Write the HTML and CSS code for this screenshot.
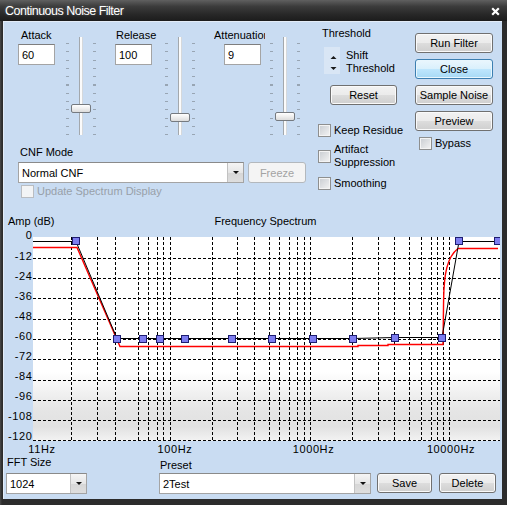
FILE: index.html
```html
<!DOCTYPE html>
<html lang="en">
<head>
    <meta charset="UTF-8">
    <title>Continuous Noise Filter</title>
    <link rel="stylesheet" href="styles.css">
</head>
<body>
<div class="window">
    <div class="titlebar">
        <span class="title">Continuous Noise Filter</span>
        <svg class="close" width="9" height="9" viewBox="0 0 9 9"><path d="M1.2 1.2l6.6 6.6M7.8 1.2l-6.6 6.6" stroke="#fff" stroke-width="2.2"/></svg>
    </div>

    <div class="client">
        <div class="top">
            <!-- sliders + mode -->
            <div class="controls">
                <div class="sliders">
                    <div class="sgroup attack">
                        <div class="sfield"><label>Attack</label><input class="num" type="text" value="60"></div>
                        <div class="slider"><span class="thumb" style="top: 69px"></span></div>
                    </div>
                    <div class="sgroup release">
                        <div class="sfield"><label>Release</label><input class="num" type="text" value="100"></div>
                        <div class="slider"><span class="thumb" style="top: 78px"></span></div>
                    </div>
                    <div class="sgroup atten">
                        <div class="sfield"><label>Attenuation</label><input class="num" type="text" value="9"></div>
                        <div class="slider"><span class="thumb" style="top: 77px"></span></div>
                    </div>
                </div>

                <div class="mode">
                    <div class="mode-label">CNF Mode</div>
                    <div class="mode-row">
                        <div class="select mode-select"><span class="value">Normal CNF</span><span class="drop"></span></div>
                        <button class="btn freeze" disabled>Freeze</button>
                    </div>
                    <label class="check disabled update"><span class="box"></span>Update Spectrum Display</label>
                </div>
            </div>

            <!-- threshold + options -->
            <div class="threshold">
                <div class="th-label">Threshold</div>
                <div class="spin-row">
                    <svg class="spin" width="16" height="27" viewBox="0 0 16 27">
                        <rect width="16" height="27" fill="#d9e6f5"/>
                        <path d="M6.5 12h6l-3-3z" fill="#1a1a1a"/>
                        <path d="M6.5 20h6l-3 3z" fill="#1a1a1a"/>
                    </svg>
                    <div class="spin-text">Shift<br>Threshold</div>
                </div>
                <button class="btn reset">Reset</button>
                <label class="check keep"><span class="box"></span>Keep Residue</label>
                <label class="check artifact"><span class="box"></span>Artifact<br>Suppression</label>
                <label class="check smooth"><span class="box"></span>Smoothing</label>
            </div>

            <!-- actions -->
            <div class="actions">
                <div class="action-list">
                    <button class="btn">Run Filter</button>
                    <button class="btn focus">Close</button>
                    <button class="btn">Sample Noise</button>
                    <button class="btn">Preview</button>
                </div>
                <label class="check bypass"><span class="box"></span>Bypass</label>
            </div>
        </div>

        <div class="chart-head">
            <span class="amp">Amp (dB)</span>
            <span class="chart-title">Frequency Spectrum</span>
        </div>

        <svg class="chart" width="499" height="225" viewBox="3 230 499 225">
            <defs>
                <linearGradient id="plotbg" x1="0" y1="0" x2="0" y2="1">
                    <stop offset="0" stop-color="#ffffff"/>
                    <stop offset="0.66" stop-color="#ffffff"/>
                    <stop offset="0.84" stop-color="#e6e6e6"/>
                    <stop offset="0.93" stop-color="#e1e1e1"/>
                    <stop offset="1" stop-color="#f3f3f3"/>
                </linearGradient>
                <clipPath id="plotclip"><rect x="33" y="237" width="467" height="204"/></clipPath>
            </defs>
            <rect x="33" y="237" width="467" height="204" fill="url(#plotbg)"/>

            <g clip-path="url(#plotclip)" shape-rendering="crispEdges" stroke="#000" stroke-width="1" stroke-dasharray="3 2">
                <path d="M33 258.5H500M33 278.5H500M33 298.5H500M33 319.5H500M33 339.5H500M33 359.5H500M33 380.5H500M33 400.5H500M33 420.5H500M33 440.5H500"/>
                <path d="M71.5 237V441M97.5 237V441M115.5 237V441M138.5 237V441M148.5 237V441M157.5 237V441M163.5 237V441M170.5 237V441M212.5 237V441M237.5 237V441M254.5 237V441M269.5 237V441M279.5 237V441M289.5 237V441M297.5 237V441M304.5 237V441M310.5 237V441M352.5 237V441M378.5 237V441M394.5 237V441M409.5 237V441M421.5 237V441M431.5 237V441M437.5 237V441M443.5 237V441M449.5 237V441"/>
            </g>

            <g clip-path="url(#plotclip)" fill="none">
                <path d="M33 247.5H77L120 346.5H358V345.5H388V344.5H443L443.6 300C444 274 447 257 458 248.5H498" stroke="#f00" stroke-width="1.4"/>
                <path d="M33 241.5H76L117 338.5H353L395 337.5H442L459 241.5H500" stroke="#000" stroke-width="1"/>
                <g fill="#7d7df0" stroke="#1c1c70" stroke-width="1" shape-rendering="crispEdges">
                    <rect x="72.5" y="237.5" width="7" height="7"/>
                    <rect x="113.5" y="335.5" width="7" height="7"/>
                    <rect x="139.5" y="335.5" width="7" height="7"/>
                    <rect x="156.5" y="335.5" width="7" height="7"/>
                    <rect x="181.5" y="335.5" width="7" height="7"/>
                    <rect x="228.5" y="335.5" width="7" height="7"/>
                    <rect x="268.5" y="335.5" width="7" height="7"/>
                    <rect x="309.5" y="335.5" width="7" height="7"/>
                    <rect x="349.5" y="335.5" width="7" height="7"/>
                    <rect x="391.5" y="334.5" width="7" height="7"/>
                    <rect x="438.5" y="334.5" width="7" height="7"/>
                    <rect x="455.5" y="237.5" width="7" height="7"/>
                    <rect x="494.5" y="237.5" width="7" height="7"/>
                </g>
            </g>

            <g class="axis" text-anchor="end">
                <text x="32.5" y="238.5">0</text>
                <text x="32.5" y="259.5">-12</text>
                <text x="32.5" y="279.5">-24</text>
                <text x="32.5" y="299.5">-36</text>
                <text x="32.5" y="319.5">-48</text>
                <text x="32.5" y="339.5">-60</text>
                <text x="32.5" y="359.5">-72</text>
                <text x="32.5" y="380">-84</text>
                <text x="32.5" y="400">-96</text>
                <text x="32.5" y="420">-108</text>
                <text x="32.5" y="440">-120</text>
            </g>
            <g class="axis" text-anchor="middle">
                <text x="42" y="453">11Hz</text>
                <text x="175" y="453">100Hz</text>
                <text x="313.5" y="453">1000Hz</text>
                <text x="451" y="453">10000Hz</text>
            </g>
        </svg>

        <div class="bottom">
            <div class="fft">
                <div class="fft-label">FFT Size</div>
                <div class="select"><span class="value">1024</span><span class="drop"></span></div>
            </div>
            <div class="preset">
                <div class="preset-label">Preset</div>
                <div class="select"><span class="value">2Test</span><span class="drop"></span></div>
            </div>
            <button class="btn save">Save</button>
            <button class="btn delete">Delete</button>
        </div>
    </div>
</div>
</body>
</html>
```

FILE: styles.css
```css
* {
    box-sizing: border-box;
}
body {
    margin: 0;
    font-family: "Liberation Sans", Arial, sans-serif;
    font-size: 11px;
    color: #000;
    background: #2e2e2e;
}
button, input {
    font: inherit;
    color: #000;
}

/* window frame */
.window {
    width: 507px;
    height: 505px;
    display: flex;
    flex-direction: column;
    background: linear-gradient(to right, #4a4a4a, #2c2c2c 2px);
}
.titlebar {
    height: 21px;
    flex: none;
    display: flex;
    align-items: flex-start;
    justify-content: space-between;
    padding: 0 7px 0 5px;
    background: linear-gradient(#606060, #3c3c3c 30%, #272727 70%, #1c1c1c);
    color: #fff;
}
.title {
    font-size: 12.5px;
    letter-spacing: -0.5px;
    line-height: 21px;
    margin-top: 1px;
    text-shadow: 0 0 3px rgba(255, 255, 255, 0.25);
}
.close {
    margin-top: 7px;
}
.client {
    flex: 1;
    margin: 0 5px 6px 3px;
    background: #c9dcf2;
    box-shadow: inset 1px 1px 0 #e3ecf7;
    display: flex;
    flex-direction: column;
}

/* top area */
.top {
    height: 193px;
    flex: none;
    display: flex;
}
.controls {
    width: 305px;
    flex: none;
}
.sliders {
    display: flex;
    margin-top: 8px;
}
.sgroup {
    display: flex;
}
.sfield {
    display: flex;
    flex-direction: column;
    width: 37px;
}
.sfield label {
    line-height: 13px;
    height: 13px;
    white-space: nowrap;
}
.num {
    margin-top: 2px;
    width: 37px;
    height: 21px;
    padding: 0 0 0 3px;
    border: 1px solid #a4a4a4;
    border-top-color: #7e7e7e;
    background: #fff;
    outline: none;
}
.attack {
    margin-left: 15px;
}
.attack label {
    padding-left: 3px;
}
.attack .slider {
    margin-left: 9px;
}
.release {
    margin-left: 19px;
}
.release label {
    padding-left: 1px;
}
.release .slider {
    margin-left: 11px;
}
.atten {
    margin-left: 19px;
}
.atten .sfield {
    width: 51px;
}
.atten label {
    overflow: hidden;
}
.atten .num {
    margin-left: 10px;
}
.atten .slider {
    margin-left: 3px;
}

.slider {
    position: relative;
    width: 32px;
    height: 100px;
    margin-top: 6px;
    background-image:
        repeating-linear-gradient(to bottom, #98a5b3 0 1px, transparent 1px 8.3px),
        repeating-linear-gradient(to bottom, #98a5b3 0 1px, transparent 1px 8.3px),
        linear-gradient(to right, #a3a8ad 0 1px, #fbfbfb 1px 3px, #d5d8db 3px 4px);
    background-size: 3px 92px, 3px 92px, 4px 100px;
    background-position: 2px 8px, 29px 8px, 15px 2px;
    background-repeat: no-repeat;
}
.thumb {
    position: absolute;
    left: 7px;
    width: 20px;
    height: 9px;
    border: 1px solid #757a80;
    border-radius: 2px;
    background: linear-gradient(#ffffff, #f0f0f0 45%, #dcdcdc);
}

/* mode */
.mode {
    margin-left: 15px;
    margin-top: 11px;
}
.mode-label {
    line-height: 13px;
    padding-left: 2px;
}
.mode-row {
    display: flex;
    margin-top: 3px;
}
.select {
    display: flex;
    align-items: center;
    height: 21px;
    background: #fff;
    border: 1px solid #a4a4a4;
    border-top-color: #8a8a8a;
}
.select .value {
    flex: 1;
    padding-left: 3px;
    white-space: nowrap;
}
.select .drop {
    width: 16px;
    height: 19px;
    display: flex;
    align-items: center;
    justify-content: center;
    border-left: 1px solid #c2c2c2;
    background: linear-gradient(#f5f5f5, #e6e6e6 50%, #d6d6d6 51%, #dedede);
}
.select .drop::after {
    content: "";
    border-left: 3px solid transparent;
    border-right: 3px solid transparent;
    border-top: 3px solid #111;
}
.mode-select {
    width: 226px;
}
.freeze {
    margin-left: 4px;
    width: 58px;
}
.update {
    margin-top: 2px;
    margin-left: 3px;
}

/* buttons */
.btn {
    height: 20px;
    padding: 0;
    border: 1px solid #707070;
    border-radius: 3px;
    background: linear-gradient(#f2f2f2, #ebebeb 50%, #dddddd 51%, #cfcfcf);
    box-shadow: inset 0 0 0 1px #fafafa;
}
.btn.focus {
    border-color: #3c7fb1;
    background: linear-gradient(#eaf6fd, #d9f0fc 50%, #bee6fd 51%, #a7d9f5);
    box-shadow: inset 0 0 0 1px #e8f6fd;
}
.btn:disabled {
    height: 21px;
    color: #a3a3a3;
    border-color: #b3b8bd;
    background: #f4f4f4;
    box-shadow: none;
}

/* checkboxes */
.check {
    display: flex;
    align-items: center;
    line-height: 13px;
}
.box {
    width: 13px;
    height: 13px;
    flex: none;
    margin-right: 3px;
    border: 1px solid #8e8f8f;
    background: linear-gradient(135deg, #c8ccd1, #f4f4f4);
    box-shadow: inset 0 0 0 1px #f4f4f4;
}
.check.disabled {
    color: #98a0a9;
}
.check.disabled .box {
    border-color: #b9bdc2;
    background: #f2f4f6;
}

/* threshold column */
.threshold {
    margin-left: 10px;
    width: 90px;
    flex: none;
}
.th-label {
    margin-top: 6px;
    line-height: 13px;
    padding-left: 4px;
}
.spin-row {
    display: flex;
    margin-top: 7px;
}
.spin {
    margin-left: 6px;
    flex: none;
}
.spin-text {
    margin-left: 6px;
    padding-top: 2px;
    line-height: 13px;
}
.reset {
    display: block;
    margin: 10px 0 0 12px;
    width: 67px;
}
.keep {
    margin-top: 19px;
}
.artifact {
    margin-top: 6px;
}
.smooth {
    margin-top: 8px;
}

/* right column */
.actions {
    margin-left: 7px;
    width: 78px;
    flex: none;
}
.action-list {
    display: flex;
    flex-direction: column;
    gap: 6px;
    margin-top: 12px;
}
.bypass {
    margin-top: 6px;
    margin-left: 4px;
}

/* chart */
.chart-head {
    flex: none;
    display: grid;
    grid-template-columns: 30px 1fr;
    margin-top: 1px;
    line-height: 13px;
}
.amp {
    padding-left: 5px;
    white-space: nowrap;
}
.chart-title {
    text-align: center;
    padding-right: 4px;
}
.chart {
    display: block;
    flex: none;
    margin-top: 2px;
}
.axis text {
    font-family: "Liberation Sans", Arial, sans-serif;
    font-size: 11px;
    letter-spacing: 0.6px;
    fill: #000;
}

/* bottom row */
.bottom {
    flex: 1;
    display: flex;
    align-items: flex-start;
}
.fft {
    margin-left: 3px;
    width: 81px;
}
.fft-label {
    margin-top: 1px;
    line-height: 13px;
    padding-left: 1px;
}
.fft .select {
    margin-top: 4px;
}
.preset {
    margin-left: 72px;
    width: 212px;
}
.preset-label {
    margin-top: 4px;
    line-height: 13px;
    padding-left: 1px;
}
.preset .select {
    margin-top: 1px;
}
.save {
    margin: 18px 0 0 6px;
    width: 55px;
}
.delete {
    margin: 18px 0 0 7px;
    width: 57px;
}
```
